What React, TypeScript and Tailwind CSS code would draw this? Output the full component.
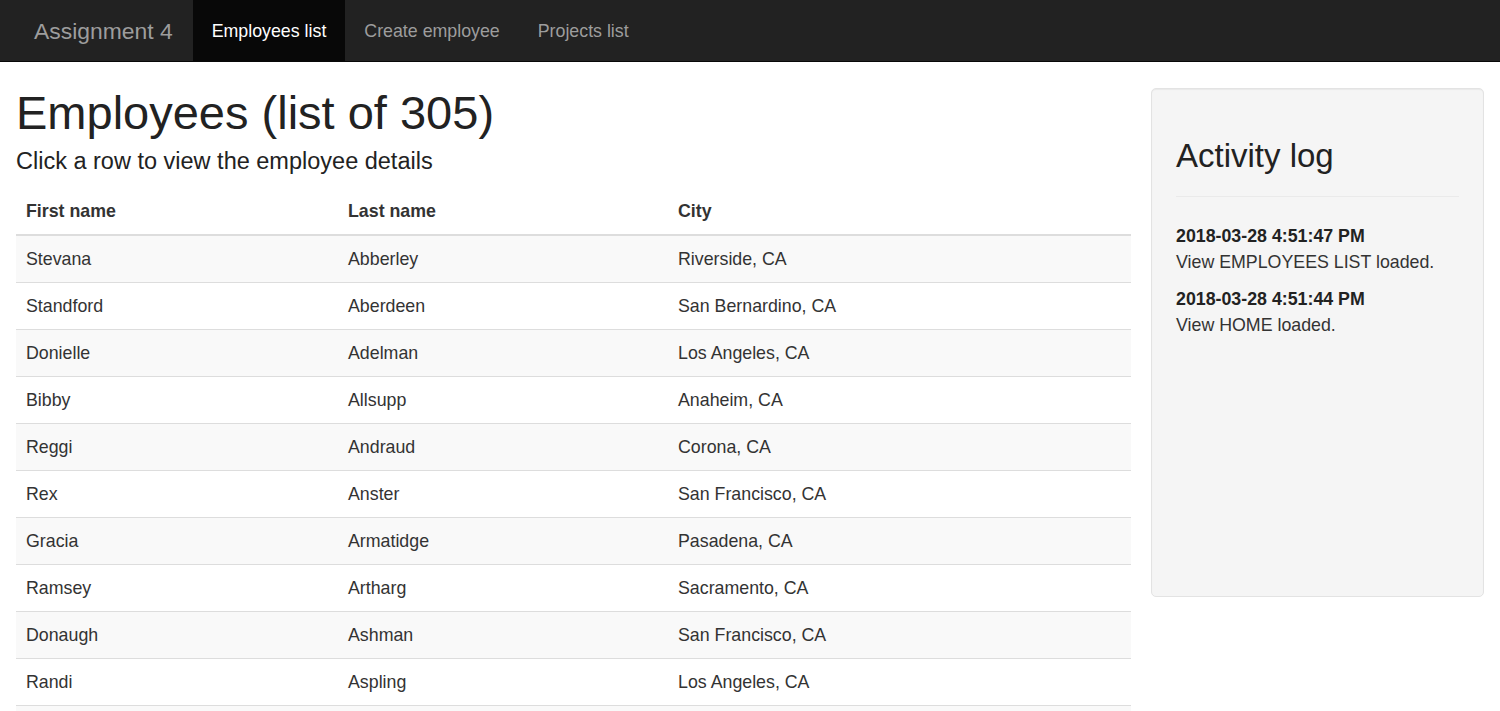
const employees = [
  { first: "Stevana", last: "Abberley", city: "Riverside, CA" },
  { first: "Standford", last: "Aberdeen", city: "San Bernardino, CA" },
  { first: "Donielle", last: "Adelman", city: "Los Angeles, CA" },
  { first: "Bibby", last: "Allsupp", city: "Anaheim, CA" },
  { first: "Reggi", last: "Andraud", city: "Corona, CA" },
  { first: "Rex", last: "Anster", city: "San Francisco, CA" },
  { first: "Gracia", last: "Armatidge", city: "Pasadena, CA" },
  { first: "Ramsey", last: "Artharg", city: "Sacramento, CA" },
  { first: "Donaugh", last: "Ashman", city: "San Francisco, CA" },
  { first: "Randi", last: "Aspling", city: "Los Angeles, CA" },
];

const activity = [
  { when: "2018-03-28 4:51:47 PM", what: "View EMPLOYEES LIST loaded." },
  { when: "2018-03-28 4:51:44 PM", what: "View HOME loaded." },
];

function Navbar() {
  return (
    <nav className="flex h-[62px] border-b border-[#080808] bg-[#222] pl-[34px]">
      <a className="flex items-center pt-[2px] pr-[20px] text-[22.9px] text-[#9d9d9d]">
        Assignment 4
      </a>
      <a className="flex items-center bg-[#080808] px-[19px] pt-[2px] text-[17.8px] text-white">
        Employees list
      </a>
      <a className="flex items-center px-[19px] pt-[2px] text-[17.8px] text-[#9d9d9d]">
        Create employee
      </a>
      <a className="flex items-center px-[19px] pt-[2px] text-[17.8px] text-[#9d9d9d]">
        Projects list
      </a>
    </nav>
  );
}

function EmployeeTable() {
  return (
    <table className="w-full border-collapse text-left">
      <thead>
        <tr className="border-b-2 border-[#ddd]">
          <th className="w-[322px] px-[10px] py-[10px] font-bold leading-[26px]">First name</th>
          <th className="w-[330px] px-[10px] py-[10px] font-bold leading-[26px]">Last name</th>
          <th className="px-[10px] py-[10px] font-bold leading-[26px]">City</th>
        </tr>
      </thead>
      <tbody>
        {employees.map((e, i) => (
          <tr
            key={e.last}
            className={`border-b border-[#ddd] ${i % 2 === 0 ? "bg-[#f9f9f9]" : "bg-white"}`}
          >
            <td className="px-[10px] py-[10px] leading-[26px]">{e.first}</td>
            <td className="px-[10px] py-[10px] leading-[26px]">{e.last}</td>
            <td className="px-[10px] py-[10px] leading-[26px]">{e.city}</td>
          </tr>
        ))}
        <tr className="bg-[#f9f9f9]">
          <td colSpan={3} className="h-[46px]" />
        </tr>
      </tbody>
    </table>
  );
}

function ActivityLog() {
  return (
    <div className="mt-[1px] h-[509px] w-[333px] shrink-0 rounded-[5px] border border-[#e3e3e3] bg-[#f5f5f5] px-[24px] pt-[49px] shadow-[inset_0_1px_1px_rgba(0,0,0,0.05)]">
      <h3 className="text-[33px] leading-[1.1] font-medium text-[#222]">Activity log</h3>
      <hr className="mt-[22px] mb-[27px] border-t border-[#eaeaea]" />
      <div className="flex flex-col gap-[12px]">
        {activity.map((a) => (
          <div key={a.when}>
            <div className="font-bold text-[#222]">{a.when}</div>
            <div>{a.what}</div>
          </div>
        ))}
      </div>
    </div>
  );
}

export default function App() {
  return (
    <div
      className="min-h-screen bg-white text-[17.8px] leading-[25.4px] text-[#333]"
      style={{ fontFamily: '"Liberation Sans", Arial, Helvetica, sans-serif' }}
    >
      <Navbar />
      <div className="flex items-start gap-[20px] px-[16px] pt-[25px]">
        <main className="min-w-0 flex-1">
          <h1 className="text-[47px] leading-[1.1] font-medium text-[#222]">
            Employees (list of 305)
          </h1>
          <h4 className="mt-[10px] text-[23.5px] leading-[1.1] font-medium text-[#222]">
            Click a row to view the employee details
          </h4>
          <div className="mt-[13px]">
            <EmployeeTable />
          </div>
        </main>
        <ActivityLog />
      </div>
    </div>
  );
}
